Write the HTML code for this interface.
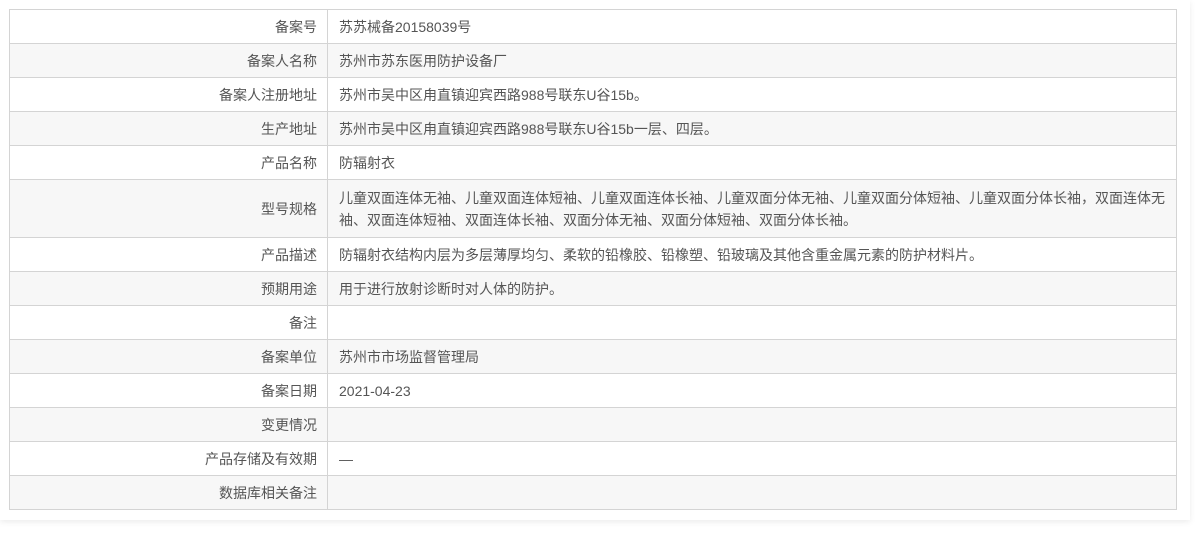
<!DOCTYPE html>
<html><head><meta charset="utf-8"><style>
html,body{margin:0;padding:0;background:#fff;width:1198px;height:534px;overflow:hidden}
.panel{position:absolute;left:0;top:0;width:1190px;height:520px;background:#fff;box-shadow:0 2px 6px rgba(0,0,0,.08)}
table{position:absolute;left:9px;top:9px;width:1168px;border-collapse:collapse;font-family:"Liberation Sans","Noto Sans CJK SC",sans-serif;font-size:14px;color:#555}
td{border:1px solid #d4d4d4;height:34px;padding:0 10px;line-height:22px;box-sizing:border-box}
td.l{width:318px;text-align:right;padding-right:10px}
td.v{padding-left:11px}
tr:nth-child(even) td{background:#f7f7f7}
tr.t td{height:58px}
</style></head><body>
<div class="panel"></div>
<table>
<tr><td class="l">备案号</td><td class="v">苏苏械备20158039号</td></tr>
<tr><td class="l">备案人名称</td><td class="v">苏州市苏东医用防护设备厂</td></tr>
<tr><td class="l">备案人注册地址</td><td class="v">苏州市吴中区甪直镇迎宾西路988号联东U谷15b。</td></tr>
<tr><td class="l">生产地址</td><td class="v">苏州市吴中区甪直镇迎宾西路988号联东U谷15b一层、四层。</td></tr>
<tr><td class="l">产品名称</td><td class="v">防辐射衣</td></tr>
<tr class="t"><td class="l">型号规格</td><td class="v">儿童双面连体无袖、儿童双面连体短袖、儿童双面连体长袖、儿童双面分体无袖、儿童双面分体短袖、儿童双面分体长袖，双面连体无袖、双面连体短袖、双面连体长袖、双面分体无袖、双面分体短袖、双面分体长袖。</td></tr>
<tr><td class="l">产品描述</td><td class="v">防辐射衣结构内层为多层薄厚均匀、柔软的铅橡胶、铅橡塑、铅玻璃及其他含重金属元素的防护材料片。</td></tr>
<tr><td class="l">预期用途</td><td class="v">用于进行放射诊断时对人体的防护。</td></tr>
<tr><td class="l">备注</td><td class="v"></td></tr>
<tr><td class="l">备案单位</td><td class="v">苏州市市场监督管理局</td></tr>
<tr><td class="l">备案日期</td><td class="v">2021-04-23</td></tr>
<tr><td class="l">变更情况</td><td class="v"></td></tr>
<tr><td class="l">产品存储及有效期</td><td class="v">—</td></tr>
<tr><td class="l">数据库相关备注</td><td class="v"></td></tr>
</table>
</body></html>
